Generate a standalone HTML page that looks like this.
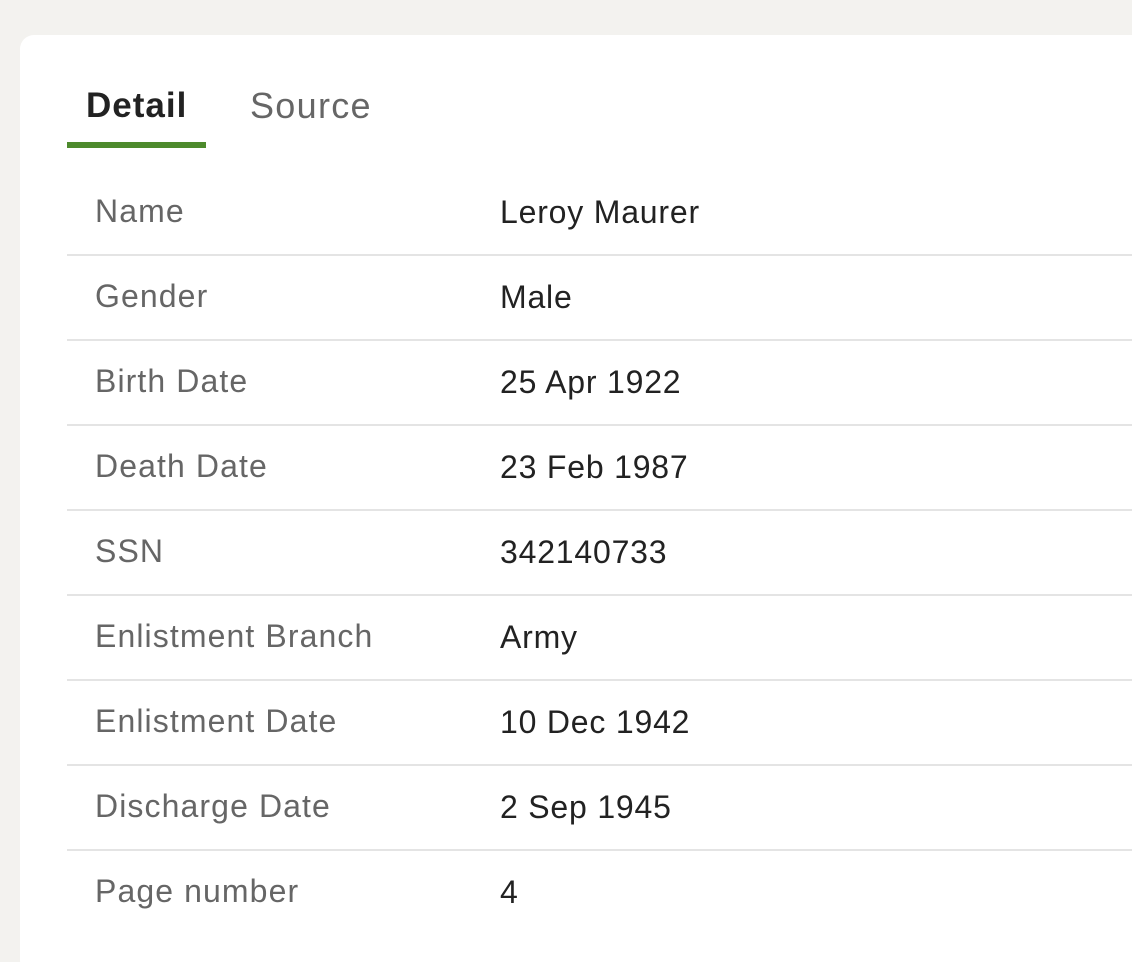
<!DOCTYPE html>
<html><head><style>
html,body{margin:0;padding:0;width:1132px;height:962px;overflow:hidden;}
body{background:#f3f2ef;font-family:"Liberation Sans",sans-serif;position:relative;}
.card{position:absolute;left:20px;top:35px;width:1140px;height:940px;background:#fff;border-radius:14px;}
.tab{position:absolute;top:86px;font-size:35px;line-height:40px;letter-spacing:1px;}
.t1{left:86px;font-weight:bold;color:#222;}
.t2{left:250px;color:#666;font-size:36px;letter-spacing:1.3px;}
.ul{position:absolute;left:67px;top:142px;width:139px;height:6px;background:#4d8a2c;}
.row{position:absolute;left:67px;width:1100px;height:85px;border-bottom:2px solid #e4e4e4;}
.l{position:absolute;left:28px;top:24px;font-size:32px;letter-spacing:1.1px;color:#666;}
.v{position:absolute;left:433px;top:25px;font-size:32px;letter-spacing:0.8px;color:#222;}
</style></head><body>
<div class="card"></div>
<div class="tab t1">Detail</div>
<div class="tab t2">Source</div>
<div class="ul"></div>
<div class="row" style="top:169px"><span class="l">Name</span><span class="v">Leroy Maurer</span></div>
<div class="row" style="top:254px"><span class="l">Gender</span><span class="v">Male</span></div>
<div class="row" style="top:339px"><span class="l">Birth Date</span><span class="v">25 Apr 1922</span></div>
<div class="row" style="top:424px"><span class="l">Death Date</span><span class="v">23 Feb 1987</span></div>
<div class="row" style="top:509px"><span class="l">SSN</span><span class="v">342140733</span></div>
<div class="row" style="top:594px"><span class="l">Enlistment Branch</span><span class="v">Army</span></div>
<div class="row" style="top:679px"><span class="l">Enlistment Date</span><span class="v">10 Dec 1942</span></div>
<div class="row" style="top:764px"><span class="l">Discharge Date</span><span class="v">2 Sep 1945</span></div>
<div class="row" style="top:849px;border-bottom:none"><span class="l">Page number</span><span class="v">4</span></div>
</body></html>
